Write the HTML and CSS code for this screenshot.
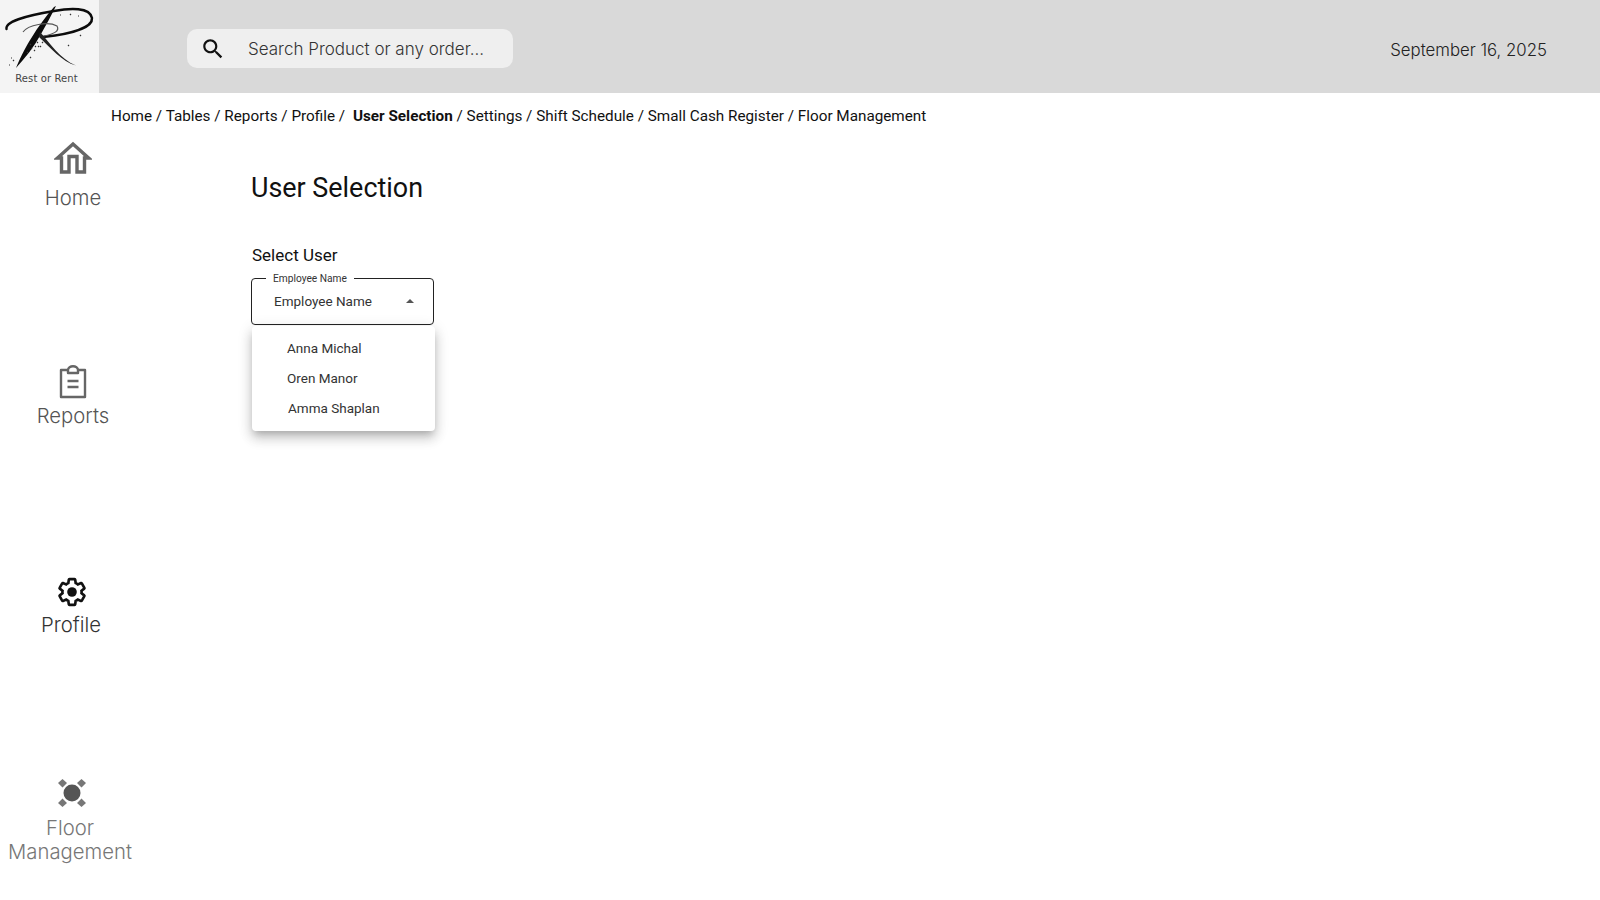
FILE: index.html
```html
<!DOCTYPE html>
<html lang="en">
<head>
<meta charset="utf-8">
<title>User Selection</title>
<link rel="stylesheet" href="styles.css">
</head>
<body>
<header class="topbar">
  <div class="logo">
    <svg class="logo-mark" viewBox="0 0 99 70" width="99" height="70">
      <path class="logo-thick" d="M56 6 C51 16 46 25 41 34 C34 47 25 58 16 68 C20 58 26 46 32 37 C38 27 46 16 54 7 Z"/>
      <path class="logo-line" d="M6.500 29 C5 22 24 16 54 11 C70 8 90 7 92 18 C93 28 70 34 43 37"/>
      <path class="logo-thin" d="M23 32 C28 25 48 21 57 26 C60 31 54 34 44 36"/>
      <path class="logo-tail" d="M40 32 C50 43 60 59 76 65.500 C62 62 50 47 39 37 Z"/>
      <path class="logo-spray" d="M30 44 l1 1 M34 50 l1 1 M27 52 l1 1 M37 42 l1 1 M38 46 l1 1 M42 42 l1 1 M31 48 l1 1 M35 46 l1 1 M13 60 l1 1 M9 65 l1 0 M11 58 l1 0 M40 46 l1 1 M60 15 l1 0 M70 14 l1 1 M78 16 l1 0 M80 35 l1 1 M68 45 l1 1 M30 57 l1 1"/>
    </svg>
    <span class="logo-text">Rest or Rent</span>
  </div>
  <div class="search">
    <svg class="search-icon" viewBox="0 0 24 24" width="26" height="26"><path d="M15.5 14h-.79l-.28-.27C15.41 12.59 16 11.11 16 9.5 16 5.91 13.09 3 9.5 3S3 5.91 3 9.5 5.91 16 9.5 16c1.61 0 3.09-.59 4.23-1.57l.27.28v.79l5 4.99L20.49 19l-4.99-5zm-6 0C7.01 14 5 11.99 5 9.5S7.01 5 9.5 5 14 7.01 14 9.5 11.99 14 9.5 14z"/></svg>
    <span class="search-text">Search Product or any order...</span>
  </div>
  <div class="date">September 16, 2025</div>
</header>

<div class="layout">
  <nav class="sidebar">
    <a class="nav-item nav-home">
      <svg viewBox="0 0 38 34" width="38" height="34"><path class="ico-home" d="M3.500 17 L19 3 L34.500 17 H30.500 V31 H23 V15.500 H15 V31 H7.500 V17 Z"/></svg>
      <span>Home</span>
    </a>
    <a class="nav-item nav-reports">
      <svg viewBox="0 0 28 34" width="28" height="34"><path class="ico-clip" d="M9 5 H2 V32 H26 V5 H19 M9 5 C9 0 19 0 19 5 V8 H9 Z M8.500 16 H19.500 M8.500 22 H19.500"/></svg>
      <span>Reports</span>
    </a>
    <a class="nav-item nav-profile">
      <svg viewBox="0 0 24 24" width="32" height="32"><path class="ico-gear" d="M19.14 12.94c.04-.3.06-.61.06-.94 0-.32-.02-.64-.07-.94l2.03-1.58c.18-.14.23-.41.12-.61l-1.92-3.32c-.12-.22-.37-.29-.59-.22l-2.39.96c-.5-.38-1.03-.7-1.62-.94l-.36-2.54c-.04-.24-.24-.41-.48-.41h-3.84c-.24 0-.43.17-.47.41l-.36 2.54c-.59.24-1.13.57-1.62.94l-2.39-.96c-.22-.08-.47 0-.59.22L2.74 8.87c-.12.21-.08.47.12.61l2.03 1.58c-.05.3-.09.63-.09.94s.02.64.07.94l-2.03 1.58c-.18.14-.23.41-.12.61l1.92 3.32c.12.22.37.29.59.22l2.39-.96c.5.38 1.03.7 1.62.94l.36 2.54c.05.24.24.41.48.41h3.84c.24 0 .44-.17.47-.41l.36-2.54c.59-.24 1.13-.56 1.62-.94l2.39.96c.22.08.47 0 .59-.22l1.92-3.32c.12-.22.07-.47-.12-.61l-2.01-1.58z"/><circle cx="12" cy="12" r="3.600"/></svg>
      <span>Profile</span>
    </a>
    <a class="nav-item nav-floor">
      <svg viewBox="0 0 32 32" width="32" height="32"><circle class="floor-table" cx="16" cy="16" r="8.500"/><path class="floor-seats" d="M6.500 2 L11 6 L6.500 10.500 L2 6 Z M25.500 2 L30 6 L25.500 10.500 L21 6 Z M6.500 21.500 L11 26 L6.500 30 L2 26 Z M25.500 21.500 L30 26 L25.500 30 L21 26 Z"/></svg>
      <span>Floor<br>Management</span>
    </a>
  </nav>

  <main class="content">
    <div class="crumbs">Home / Tables / Reports / Profile / <b>User Selection</b> / Settings / Shift Schedule / Small Cash Register / Floor Management</div>
    <div class="panel">
      <h1>User Selection</h1>
      <div class="select-label">Select User</div>
      <div class="field">
        <span class="legend">Employee Name</span>
        <span class="value">Employee Name</span>
        <span class="caret"></span>
      </div>
      <ul class="menu">
        <li>Anna Michal</li>
        <li>Oren Manor</li>
        <li class="nudge">Amma Shaplan</li>
      </ul>
    </div>
  </main>
</div>
</body>
</html>
```
FILE: styles.css
```css
* { box-sizing: border-box; }
html, body { margin: 0; height: 100%; background: #fff; overflow: hidden; }
body { font-family: Inter, "Liberation Sans", sans-serif; color: #111; }

.topbar {
  height: 93px;
  background: #d9d9d9;
  display: flex;
  align-items: center;
}
.logo {
  width: 99px;
  height: 93px;
  background: #f4f4f4;
  display: flex;
  flex-direction: column;
  align-items: center;
}
.logo-mark { display: block; flex: none; }
.logo-thick { fill: #0c0c0c; }
.logo-tail { fill: #222; }
.logo-line { fill: none; stroke: #0c0c0c; stroke-width: 2.400; stroke-linecap: round; }
.logo-thin { fill: none; stroke: #555; stroke-width: 1.200; }
.logo-spray { fill: none; stroke: #333; stroke-width: 1.200; }
.logo-text {
  font-family: "DejaVu Sans", sans-serif;
  font-size: 10px;
  line-height: 12px;
  margin-top: 3px;
  margin-right: 6px;
  letter-spacing: .1px;
  color: #444;
  white-space: nowrap;
}
.search {
  width: 326px;
  height: 39px;
  margin-left: 88px;
  margin-top: 4px;
  background: #efefef;
  border-radius: 10px;
  display: flex;
  align-items: center;
  padding-left: 13px;
}
.search-icon { flex: none; fill: #111; }
.search-text { margin-left: 22px; font-size: 17px; font-weight: 300; color: #333; white-space: nowrap; }
.date { margin-left: auto; margin-right: 53px; margin-top: 7px; font-size: 16.800px; font-weight: 300; color: #222; }

.layout { display: flex; height: 807px; }
.sidebar {
  width: 111px;
  flex: none;
  position: relative;
}
.nav-item {
  position: absolute;
  display: flex;
  flex-direction: column;
  align-items: center;
  font-size: 20.300px;
  font-weight: 300;
  line-height: 24px;
  text-align: center;
  color: #555;
  width: 144px;
  left: 0;
}
.nav-item svg { display: block; }
.nav-home { top: 48px; left: 1px; }
.nav-home span { margin-top: 11px; }
.nav-reports { top: 272px; left: 1px; }
.nav-reports span { margin-top: 5px; }
.nav-profile { top: 483px; left: 0; color: #333; }
.nav-profile span { margin-top: 5px; margin-left: -2px; }
.nav-floor { top: 684px; left: -2px; color: #777; }
.nav-floor span { margin-top: 7px; }
.nav-floor svg { margin-left: 3px; }

.ico-home { fill: none; stroke: #666; stroke-width: 3.400; stroke-linejoin: miter; }
.ico-clip { fill: none; stroke: #666; stroke-width: 2.400; stroke-linejoin: round; }
.ico-gear { fill: none; stroke: #111; stroke-width: 2; }
.nav-profile circle { fill: #111; }
.floor-table { fill: #555; }
.floor-seats { fill: #777; }

.content { flex: 1; min-width: 0; }
.crumbs {
  font-family: Roboto, sans-serif;
  font-size: 15.280px;
  line-height: 20px;
  padding-top: 13px;
  color: #111;
  white-space: nowrap;
}
.crumbs b { font-weight: 700; margin-left: 4px; }
.panel { padding: 44px 0 0 140px; width: 360px; }
h1 {
  font-family: Roboto, sans-serif;
  font-weight: 400;
  font-size: 26.900px;
  line-height: 36px;
  margin: 0;
  color: #111;
}
.select-label {
  font-family: Roboto, sans-serif;
  font-size: 17px;
  line-height: 22px;
  margin: 38px 0 0 1px;
}
.field {
  position: relative;
  margin-top: 12px;
  width: 183px;
  height: 47px;
  border: 1px solid #222;
  border-radius: 4px;
  display: flex;
  align-items: center;
  padding: 0 0 2px 22px;
}
.legend {
  position: absolute;
  top: -6px;
  left: 14px;
  padding: 0 7px;
  background: #fff;
  font-family: Roboto, sans-serif;
  font-size: 10.200px;
  line-height: 12px;
  color: #333;
  white-space: nowrap;
}
.value { font-family: Roboto, sans-serif; font-size: 13.500px; color: #333; }
.caret {
  position: absolute;
  right: 19px;
  top: 20px;
  border-left: 4px solid transparent;
  border-right: 4px solid transparent;
  border-bottom: 4px solid #555;
}
.menu {
  list-style: none;
  margin: 1px 0 0 1px;
  padding: 7px 0 8px;
  width: 183px;
  height: 105px;
  background: #fff;
  border-radius: 4px;
  box-shadow: 0 5px 7px -3px rgba(0,0,0,.2), 0 8px 12px 1px rgba(0,0,0,.12), 0 3px 14px 2px rgba(0,0,0,.1);
  font-family: Roboto, sans-serif;
  font-size: 13.500px;
  color: #333;
}
.menu li { height: 30px; line-height: 30px; padding-left: 35px; }
.menu .nudge { padding-left: 36px; }
```
